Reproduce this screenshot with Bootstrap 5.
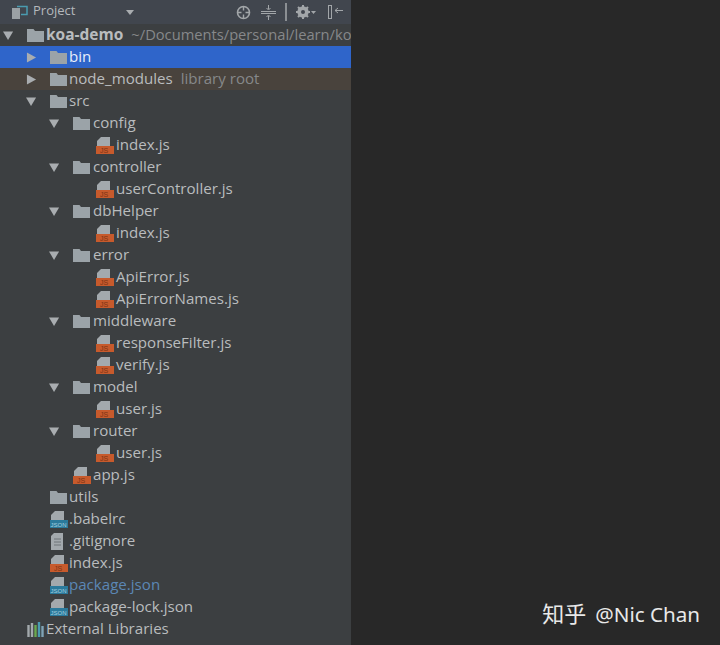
<!DOCTYPE html>
<html lang="en">
<head>
    <meta charset="UTF-8">
    <meta name="viewport" content="width=device-width, initial-scale=1.0">
    <title>Project</title>
    <link href="https://cdn.jsdelivr.net/npm/bootstrap@5.3.2/dist/css/bootstrap.min.css" rel="stylesheet">
    <style>
        html, body { height: 645px; overflow: hidden; background: #282828; }
        .ide-panel { width: 351px; height: 645px; background: #3c3f41; font-family: "Open Sans", "Liberation Sans", sans-serif; overflow: hidden; }
        .ide-head { height: 24px; background: #41464e; color: #b4b8bc; font-size: 13px; padding-left: 11px; }
        .ide-head .title { margin-left: 5px; margin-bottom: 2px; width: 93px; }
        .tool-gap { margin-right: 9px; }
        .tool-gap-m { margin-right: 10px; }
        .tool-gap-w { margin-right: 12px; }
        .tree-row { height: 22px; padding-bottom: 2px; white-space: nowrap; color: #b9bcbe; font-size: 15.1px; line-height: 20px; }
        .lvl-0 { padding-left: 3px; }
        .lvl-1 { padding-left: 26px; }
        .lvl-2 { padding-left: 49px; }
        .lvl-3 { padding-left: 72px; }
        .arrow-slot { width: 24px; flex: none; display: flex; align-items: center; margin-top: 2px; }
        .icon-slot { width: 19px; flex: none; display: flex; align-items: center; margin-top: 2px; }
        .lvl-2 .icon-slot, .lvl-3 .icon-slot { width: 20px; }
        .tree-row.selected { background: #2f65ca; color: #e8eefa; }
        .tree-row.libroot { background: #49433d; }
        .root-name { font-size: 15.5px; }
        .hint { color: #86888a; margin-left: 8px; }
        .path-hint { font-size: 14.7px; }
        .vcs-new { color: #5b87b5; }
        .tag-js { font: 7px "Liberation Sans", sans-serif; fill: #7a3416; }
        .tag-json { font: 6px "Liberation Sans", sans-serif; fill: #a6cfdf; }
        .watermark { height: 645px; font-family: "Noto Sans", "Noto Sans CJK SC", sans-serif; font-size: 20.6px; color: #e9e9e9; padding: 0 20px 15px 0; }
        .watermark .cn { font-size: 22px; margin-right: 9px; }
    </style>
</head>
<body>
    <svg width="0" height="0" class="d-block">
        <symbol id="open" viewBox="0 0 12 12"><path d="M0 1.5h11L5.5 11z" fill="#a9adb0"/></symbol>
        <symbol id="closed" viewBox="0 0 12 12"><path d="M1 0.5v11L11 6z" fill="#a9adb0"/></symbol>
        <symbol id="folder" viewBox="0 0 17 14"><path d="M0 1h6.5l1.5 2h9v11H0z" fill="#9ba3a8"/></symbol>
        <symbol id="jsfile" viewBox="0 0 19 19"><path d="M5 1h9v9H1V5z" fill="#a3a9ad"/><rect x="0" y="10" width="18" height="8" fill="#c75a2c"/></symbol>
        <symbol id="jsonfile" viewBox="0 0 19 19"><path d="M5 1h9v9H1V5z" fill="#a3a9ad"/><rect x="0" y="10" width="18" height="8" fill="#2b7a9c"/></symbol>
    </svg>
    <div class="d-flex">
        <div class="ide-panel flex-shrink-0">
            <div class="ide-head d-flex align-items-center">
                <svg width="17" height="15" viewBox="0 0 17 15"><rect x="1" y="3" width="8" height="11" fill="#9aa0a4"/><path d="M6 1.5h10v8h-6" fill="none" stroke="#4a9bb0" stroke-width="1.5"/></svg>
                <span class="title">Project</span>
                <svg width="8" height="5" viewBox="0 0 8 5"><path d="M0 0h8L4 5z" fill="#a9adb0"/></svg>
                <svg class="ms-auto tool-gap-m" width="15" height="15" viewBox="0 0 15 15"><circle cx="7.5" cy="7.5" r="6" fill="none" stroke="#a2a6a9" stroke-width="1.6"/><path d="M7.5 2v3.5M7.5 9.5V13M2 7.5h3.5M9.5 7.5H13" stroke="#a2a6a9" stroke-width="1.4"/></svg>
                <svg class="tool-gap" width="15" height="15" viewBox="0 0 15 15"><path d="M0 6.5h15M0 8.5h15" stroke="#a2a6a9"/><path d="M7.5 0v4M5.5 3l2 2 2-2M7.5 15v-4M5.5 12l2-2 2 2" fill="none" stroke="#a2a6a9"/></svg>
                <svg class="tool-gap" width="2" height="18" viewBox="0 0 2 18"><rect width="2" height="18" fill="#8b8f93"/></svg>
                <svg class="tool-gap-w" width="20" height="14" viewBox="0 0 20 14"><circle cx="7" cy="7" r="4" fill="none" stroke="#a2a6a9" stroke-width="3.4"/><path d="M7 0v14M0 7h14M2 2l10 10M12 2L2 12" stroke="#a2a6a9" stroke-width="2"/><circle cx="7" cy="7" r="2" fill="#41464e"/><path d="M15 6h5l-2.5 3z" fill="#a2a6a9"/></svg>
                <svg class="me-2" width="15" height="14" viewBox="0 0 15 14"><rect x="0.5" y="0.5" width="3" height="13" fill="none" stroke="#a2a6a9"/><path d="M7 5.5h8M7 5.5l3-2.5M7 5.5l3 2.5" fill="none" stroke="#a2a6a9"/></svg>
            </div>

            <div class="tree-row d-flex align-items-center lvl-0"><span class="arrow-slot"><svg width="11" height="11"><use href="#open"/></svg></span><span class="icon-slot"><svg width="17" height="14"><use href="#folder"/></svg></span><strong class="fw-bold root-name">koa-demo</strong><span class="hint path-hint">~/Documents/personal/learn/ko</span></div>
            <div class="tree-row selected d-flex align-items-center lvl-1"><span class="arrow-slot"><svg width="11" height="11"><use href="#closed"/></svg></span><span class="icon-slot"><svg width="17" height="14"><use href="#folder"/></svg></span>bin</div>
            <div class="tree-row libroot d-flex align-items-center lvl-1"><span class="arrow-slot"><svg width="11" height="11"><use href="#closed"/></svg></span><span class="icon-slot"><svg width="17" height="14"><use href="#folder"/></svg></span>node_modules<span class="hint">library root</span></div>
            <div class="tree-row d-flex align-items-center lvl-1"><span class="arrow-slot"><svg width="11" height="11"><use href="#open"/></svg></span><span class="icon-slot"><svg width="17" height="14"><use href="#folder"/></svg></span>src</div>
            <div class="tree-row d-flex align-items-center lvl-2"><span class="arrow-slot"><svg width="11" height="11"><use href="#open"/></svg></span><span class="icon-slot"><svg width="17" height="14"><use href="#folder"/></svg></span>config</div>
            <div class="tree-row d-flex align-items-center lvl-3"><span class="arrow-slot"></span><span class="icon-slot"><svg width="19" height="19"><use href="#jsfile"/><text class="tag-js" x="4" y="17">JS</text></svg></span>index.js</div>
            <div class="tree-row d-flex align-items-center lvl-2"><span class="arrow-slot"><svg width="11" height="11"><use href="#open"/></svg></span><span class="icon-slot"><svg width="17" height="14"><use href="#folder"/></svg></span>controller</div>
            <div class="tree-row d-flex align-items-center lvl-3"><span class="arrow-slot"></span><span class="icon-slot"><svg width="19" height="19"><use href="#jsfile"/><text class="tag-js" x="4" y="17">JS</text></svg></span>userController.js</div>
            <div class="tree-row d-flex align-items-center lvl-2"><span class="arrow-slot"><svg width="11" height="11"><use href="#open"/></svg></span><span class="icon-slot"><svg width="17" height="14"><use href="#folder"/></svg></span>dbHelper</div>
            <div class="tree-row d-flex align-items-center lvl-3"><span class="arrow-slot"></span><span class="icon-slot"><svg width="19" height="19"><use href="#jsfile"/><text class="tag-js" x="4" y="17">JS</text></svg></span>index.js</div>
            <div class="tree-row d-flex align-items-center lvl-2"><span class="arrow-slot"><svg width="11" height="11"><use href="#open"/></svg></span><span class="icon-slot"><svg width="17" height="14"><use href="#folder"/></svg></span>error</div>
            <div class="tree-row d-flex align-items-center lvl-3"><span class="arrow-slot"></span><span class="icon-slot"><svg width="19" height="19"><use href="#jsfile"/><text class="tag-js" x="4" y="17">JS</text></svg></span>ApiError.js</div>
            <div class="tree-row d-flex align-items-center lvl-3"><span class="arrow-slot"></span><span class="icon-slot"><svg width="19" height="19"><use href="#jsfile"/><text class="tag-js" x="4" y="17">JS</text></svg></span>ApiErrorNames.js</div>
            <div class="tree-row d-flex align-items-center lvl-2"><span class="arrow-slot"><svg width="11" height="11"><use href="#open"/></svg></span><span class="icon-slot"><svg width="17" height="14"><use href="#folder"/></svg></span>middleware</div>
            <div class="tree-row d-flex align-items-center lvl-3"><span class="arrow-slot"></span><span class="icon-slot"><svg width="19" height="19"><use href="#jsfile"/><text class="tag-js" x="4" y="17">JS</text></svg></span>responseFilter.js</div>
            <div class="tree-row d-flex align-items-center lvl-3"><span class="arrow-slot"></span><span class="icon-slot"><svg width="19" height="19"><use href="#jsfile"/><text class="tag-js" x="4" y="17">JS</text></svg></span>verify.js</div>
            <div class="tree-row d-flex align-items-center lvl-2"><span class="arrow-slot"><svg width="11" height="11"><use href="#open"/></svg></span><span class="icon-slot"><svg width="17" height="14"><use href="#folder"/></svg></span>model</div>
            <div class="tree-row d-flex align-items-center lvl-3"><span class="arrow-slot"></span><span class="icon-slot"><svg width="19" height="19"><use href="#jsfile"/><text class="tag-js" x="4" y="17">JS</text></svg></span>user.js</div>
            <div class="tree-row d-flex align-items-center lvl-2"><span class="arrow-slot"><svg width="11" height="11"><use href="#open"/></svg></span><span class="icon-slot"><svg width="17" height="14"><use href="#folder"/></svg></span>router</div>
            <div class="tree-row d-flex align-items-center lvl-3"><span class="arrow-slot"></span><span class="icon-slot"><svg width="19" height="19"><use href="#jsfile"/><text class="tag-js" x="4" y="17">JS</text></svg></span>user.js</div>
            <div class="tree-row d-flex align-items-center lvl-2"><span class="arrow-slot"></span><span class="icon-slot"><svg width="19" height="19"><use href="#jsfile"/><text class="tag-js" x="4" y="17">JS</text></svg></span>app.js</div>
            <div class="tree-row d-flex align-items-center lvl-1"><span class="arrow-slot"></span><span class="icon-slot"><svg width="17" height="14"><use href="#folder"/></svg></span>utils</div>
            <div class="tree-row d-flex align-items-center lvl-1"><span class="arrow-slot"></span><span class="icon-slot"><svg width="19" height="19"><use href="#jsonfile"/><text class="tag-json" x="0.5" y="16.5">JSON</text></svg></span>.babelrc</div>
            <div class="tree-row d-flex align-items-center lvl-1"><span class="arrow-slot"></span><span class="icon-slot"><svg width="14" height="17" viewBox="0 0 14 17"><path d="M4 0h9v17H1V3z" fill="#a3a9ad"/><path d="M4 6h7M4 9h7M4 12h7" stroke="#6f7478"/></svg></span>.gitignore</div>
            <div class="tree-row d-flex align-items-center lvl-1"><span class="arrow-slot"></span><span class="icon-slot"><svg width="19" height="19"><use href="#jsfile"/><text class="tag-js" x="4" y="17">JS</text></svg></span>index.js</div>
            <div class="tree-row d-flex align-items-center lvl-1"><span class="arrow-slot"></span><span class="icon-slot"><svg width="19" height="19"><use href="#jsonfile"/><text class="tag-json" x="0.5" y="16.5">JSON</text></svg></span><span class="vcs-new">package.json</span></div>
            <div class="tree-row d-flex align-items-center lvl-1"><span class="arrow-slot"></span><span class="icon-slot"><svg width="19" height="19"><use href="#jsonfile"/><text class="tag-json" x="0.5" y="16.5">JSON</text></svg></span>package-lock.json</div>
            <div class="tree-row d-flex align-items-center lvl-0"><span class="arrow-slot"></span><span class="icon-slot"><svg width="17" height="15" viewBox="0 0 17 15"><path d="M1.5 3v12" stroke="#a3a9ad" stroke-width="2.4"/><path d="M5 1v14" stroke="#a3a9ad" stroke-width="2.4"/><path d="M8.5 3v12" stroke="#6aa84f" stroke-width="2.4"/><path d="M12 0v15" stroke="#4a9bb0" stroke-width="2.4"/><path d="M15.5 4v11" stroke="#7fa3b5" stroke-width="2.4"/></svg></span>External Libraries</div>
        </div>
        <div class="flex-grow-1 d-flex align-items-end justify-content-end watermark">
            <span class="cn">知乎</span><span>@Nic Chan</span>
        </div>
    </div>
    <script src="https://cdn.jsdelivr.net/npm/bootstrap@5.3.2/dist/js/bootstrap.bundle.min.js"></script>
</body>
</html>
